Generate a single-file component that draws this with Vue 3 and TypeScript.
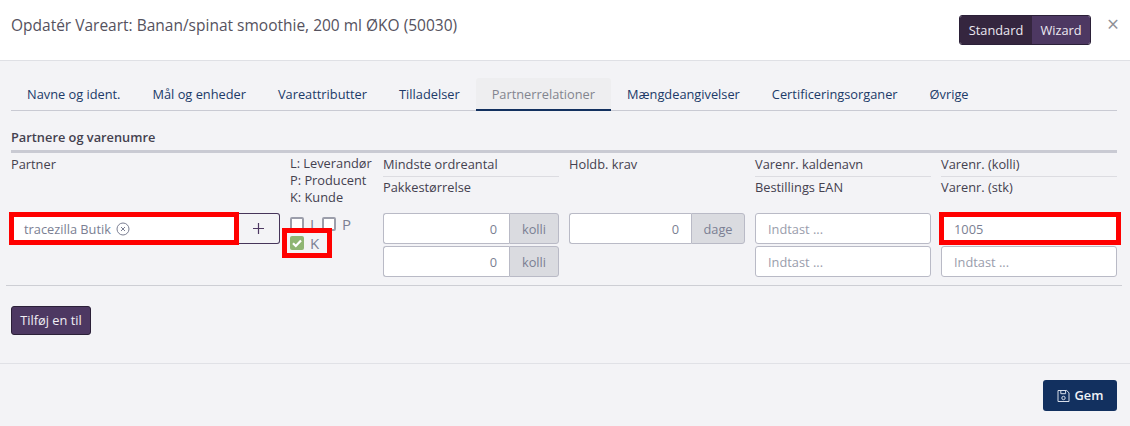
<script setup lang="ts">
const tabs = [
  'Navne og ident.',
  'Mål og enheder',
  'Vareattributter',
  'Tilladelser',
  'Partnerrelationer',
  'Mængdeangivelser',
  'Certificeringsorganer',
  'Øvrige',
]
const activeTab = 'Partnerrelationer'
</script>

<template>
  <div class="modal">
    <header class="head">
      <h1 class="title">Opdatér Vareart: Banan/spinat smoothie, 200 ml ØKO (50030)</h1>
      <div class="head-right">
        <div class="seg">
          <span class="seg-item seg-dark">Standard</span>
          <span class="seg-item seg-active">Wizard</span>
        </div>
        <span class="close">×</span>
      </div>
    </header>

    <section class="body">
      <nav class="tabs">
        <a v-for="t in tabs" :key="t" class="tab" :class="{ active: t === activeTab }">{{ t }}</a>
      </nav>

      <h2 class="section-title">Partnere og varenumre</h2>

      <div class="grid labels">
        <div>Partner</div>
        <div class="legend">
          <div>L: Leverandør</div>
          <div>P: Producent</div>
          <div>K: Kunde</div>
        </div>
        <div class="stack"><div class="l1">Mindste ordreantal</div><div class="l2">Pakkestørrelse</div></div>
        <div>Holdb. krav</div>
        <div class="stack"><div class="l1">Varenr. kaldenavn</div><div class="l2">Bestillings EAN</div></div>
        <div class="stack"><div class="l1">Varenr. (kolli)</div><div class="l2">Varenr. (stk)</div></div>
      </div>

      <div class="grid fields">
        <div class="group marked-wrap">
          <div class="control partner">
            <span>tracezilla Butik</span>
            <svg class="x-icon" width="14" height="14" viewBox="0 0 14 14" fill="none" stroke="#7b7f93">
              <circle cx="7" cy="7" r="6" />
              <path d="M5 5l4 4M9 5l-4 4" />
            </svg>
          </div>
          <button class="plus">
            <svg width="11" height="11" viewBox="0 0 11 11" stroke="#4d3862" stroke-width="1.2">
              <path d="M5.5 0v11M0 5.5h11" />
            </svg>
          </button>
          <div class="mark mark-partner"></div>
        </div>

        <div class="checks marked-wrap">
          <div class="check-row">
            <span class="box"></span><span class="check-label l">L</span>
            <span class="box"></span><span class="check-label">P</span>
          </div>
          <div class="check-row">
            <span class="box on">
              <svg width="12" height="12" viewBox="0 0 12 12" fill="none" stroke="#fff" stroke-width="2.2">
                <path d="M2 6.2l2.8 2.8L10 3.4" />
              </svg>
            </span>
            <span class="check-label">K</span>
          </div>
          <div class="mark mark-k"></div>
        </div>

        <div class="rows">
          <div class="group">
            <div class="control num">0</div><span class="addon">kolli</span>
          </div>
          <div class="group">
            <div class="control num">0</div><span class="addon">kolli</span>
          </div>
        </div>

        <div class="rows">
          <div class="group">
            <div class="control num">0</div><span class="addon dage">dage</span>
          </div>
        </div>

        <div class="rows">
          <div class="control solo ph">Indtast ...</div>
          <div class="control solo ph">Indtast ...</div>
        </div>

        <div class="rows marked-wrap">
          <div class="control solo val">1005</div>
          <div class="control solo ph">Indtast ...</div>
          <div class="mark mark-val"></div>
        </div>
      </div>

      <hr class="rule" />

      <button class="add">Tilføj en til</button>
    </section>

    <footer class="foot">
      <button class="save">
        <svg width="13" height="14" viewBox="0 0 13 14" fill="none" stroke="#d8deea" stroke-width="1">
          <path d="M1 1.5h8.7l2.3 2.3v8.7h-11z" />
          <path d="M3.8 1.5v3.2h4.8v-3.2" />
          <circle cx="6.5" cy="9" r="1.7" />
        </svg>
        <span>Gem</span>
      </button>
    </footer>
  </div>
</template>

<style>
html, body { margin: 0; background: #f3f3f6; }
</style>

<style scoped>
.modal {
  width: 1130px;
  height: 426px;
  overflow: hidden;
  background: #f3f3f6;
  font-family: "Open Sans", "Noto Sans", sans-serif;
  font-size: 12.8px;
  line-height: 18px;
  color: #44414f;
}
.head {
  height: 61px;
  box-sizing: border-box;
  background: #fff;
  border-bottom: 1px solid #dfe0e5;
  display: flex;
  justify-content: space-between;
  align-items: flex-start;
  padding: 0 13px 0 11px;
}
.title {
  margin: 14px 0 0;
  font-size: 15.5px;
  line-height: 22px;
  font-weight: 400;
  color: #55525e;
}
.head-right { display: flex; align-items: flex-start; }
.seg {
  margin-top: 15px;
  height: 30px;
  display: flex;
  border-radius: 3px;
  overflow: hidden;
  border: 1px solid #2b2038;
  box-sizing: border-box;
  color: #ece8f1;
}
.seg-item { display: flex; align-items: center; justify-content: center; }
.seg-dark { width: 72px; background: #35263f; }
.seg-active { width: 58px; background: #4d3862; }
.close {
  margin: 13px 0 0 16px;
  width: 10px;
  font-size: 21px;
  line-height: 22px;
  color: #8f9097;
  text-align: center;
}
.body { padding: 17px 13px 0 11px; height: 285px; box-sizing: content-box; width: 1106px; }
.tabs {
  display: flex;
  height: 32px;
  border-bottom: 1px solid #c9cad3;
}
.tab {
  padding: 7px 16px 0;
  height: 25px;
  margin-bottom: -1px;
  color: #203a68;
  box-sizing: content-box;
  border-radius: 3px 3px 0 0;
}
.tab.active {
  color: #83858f;
  background: #eeeef0;
  border-bottom: 2px solid #12305f;
  height: 24px;
}
.section-title {
  margin: 17px 0 0;
  font-size: 12.8px;
  line-height: 18px;
  font-weight: 600;
  color: #44414f;
  padding-bottom: 4px;
  border-bottom: 3px solid #c9cad3;
}
.grid {
  display: grid;
  grid-template-columns: 269px 83px 176px 176px 176px 176px;
  column-gap: 10px;
}
.labels { padding-top: 2px; height: 58px; box-sizing: content-box; }
.legend div { line-height: 17px; white-space: nowrap; }
.stack .l1 { padding-bottom: 3px; border-bottom: 1px solid #dcdce1; height: 18px; box-sizing: content-box; }
.stack .l2 { padding-top: 1px; }
.fields { height: 64px; }
.group { display: flex; height: 31px; }
.marked-wrap { position: relative; }
.control {
  box-sizing: border-box;
  height: 31px;
  background: #fff;
  border: 1px solid #b9bac6;
  display: flex;
  align-items: center;
  color: #7b7f93;
}
.partner {
  width: 226px;
  padding-left: 12px;
  border-radius: 3px 0 0 3px;
}
.x-icon { margin-left: 5px; }
.plus {
  width: 43px;
  height: 31px;
  box-sizing: border-box;
  border: 1px solid #46355a;
  border-left: 0;
  border-radius: 0 3px 3px 0;
  background: #f3f3f6;
  padding: 0;
  display: flex;
  align-items: center;
  justify-content: center;
}
.mark {
  position: absolute;
  border: 5px solid #ff0000;
  box-sizing: border-box;
  pointer-events: none;
}
.mark-partner { left: -2px; top: -1px; width: 230px; height: 33px; }
.mark-k { left: -8px; top: 15px; width: 50px; height: 30px; }
.mark-val { left: -2px; top: -1px; width: 182px; height: 33px; }
.checks { padding-top: 2px; }
.check-row { display: flex; align-items: center; height: 17px; margin-bottom: 2px; }
.box {
  width: 14px;
  height: 14px;
  box-sizing: border-box;
  border: 2px solid #9c9eab;
  border-radius: 2px;
  background: #fff;
  display: flex;
  align-items: center;
  justify-content: center;
}
.box.on { background: #8fb573; border: 0; }
.check-label { margin-left: 6px; color: #7b7f93; font-size: 15px; width: 12px; }
.check-label.l { width: 12px; }
.rows { display: flex; flex-direction: column; gap: 2px; }
.num {
  flex: 1;
  justify-content: flex-end;
  padding-right: 12px;
  border-radius: 3px 0 0 3px;
  border-right: 0;
}
.addon {
  width: 50px;
  box-sizing: border-box;
  height: 31px;
  display: flex;
  align-items: center;
  justify-content: center;
  background: #dadbe0;
  border: 1px solid #b9bac6;
  border-radius: 0 3px 3px 0;
  color: #7b7f93;
}
.addon.dage { width: 54px; }
.solo {
  padding-left: 12px;
  border-radius: 3px;
}
.ph { color: #9a9dac; }
.rule {
  margin: 8px -5px 0 -5px;
  border: 0;
  border-top: 1px solid #cdced4;
}
.add {
  display: block;
  margin-top: 20px;
  width: 80px;
  height: 29px;
  padding: 0;
  box-sizing: border-box;
  background: #4d3862;
  border: 1px solid #2b2038;
  border-radius: 3px;
  color: #f1eef4;
  font: 400 12.8px/1 "Open Sans", sans-serif;
}
.foot {
  border-top: 1px solid #e0e1e6;
  padding: 16px 13px 0 0;
  display: flex;
  justify-content: flex-end;
}
.save {
  width: 74px;
  height: 31px;
  background: #12305f;
  border: 0;
  border-radius: 3px;
  color: #f1f3f7;
  font: 600 12.8px/1 "Open Sans", sans-serif;
  display: flex;
  align-items: center;
  justify-content: center;
  gap: 5px;
  padding: 0;
}
</style>
